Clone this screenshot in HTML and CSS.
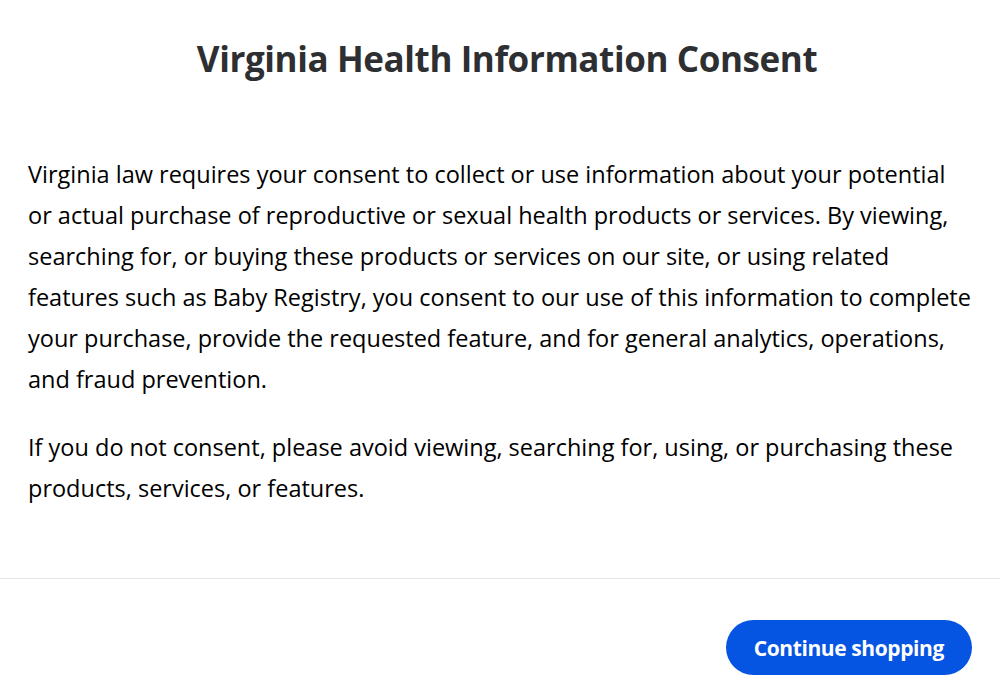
FILE: index.html
```html
<!DOCTYPE html>
<html lang="en">
<head>
  <meta charset="UTF-8">
  <meta name="viewport" content="width=device-width, initial-scale=1.0">
  <title>Virginia Health Information Consent</title>
  <link rel="stylesheet" href="styles.css">
</head>
<body>

<div class="modal">
  <h1>Virginia Health Information Consent</h1>

  <div class="content">
    <p>Virginia law requires your consent to collect or use information about your potential<br>
    or actual purchase of reproductive or sexual health products or services. By viewing,<br>
    searching for, or buying these products or services on our site, or using related<br>
    features such as Baby Registry, you consent to our use of this information to complete<br>
    your purchase, provide the requested feature, and for general analytics, operations,<br>
    and fraud prevention.</p>
    <p>If you do not consent, please avoid viewing, searching for, using, or purchasing these<br>
    products, services, or features.</p>
  </div>

  <div class="footer">
    <button class="btn">Continue shopping</button>
  </div>
</div>

</body>
</html>
```

FILE: styles.css
```css
body {
  margin: 0;
  background: #fff;
  font-family: 'Open Sans', sans-serif;
  color: #2e2f32;
}

.modal {
  width: 1000px;
  height: 700px;
  display: flex;
  flex-direction: column;
}

h1 {
  margin: 0;
  padding: 36px 0 0 14px;
  text-align: center;
  font-size: 35px;
  font-weight: 700;
  line-height: 46px;
  letter-spacing: -0.4px;
}

.content {
  padding: 72px 10px 0 28px;
  height: 496px;
  box-sizing: border-box;
}

.content p {
  margin: 0 0 27px;
  font-size: 23.5px;
  line-height: 41px;
  color: #000;
  white-space: nowrap;
}

.footer {
  border-top: 1px solid #e3e4e5;
  padding: 41px 28px 0;
  display: flex;
  justify-content: flex-end;
}

.btn {
  background: #0654e2;
  color: #fff;
  border: none;
  border-radius: 28px;
  height: 55px;
  padding: 0 28px;
  font-family: 'Open Sans', sans-serif;
  font-size: 21px;
  font-weight: 700;
  letter-spacing: -0.4px;
  cursor: pointer;
}
```
